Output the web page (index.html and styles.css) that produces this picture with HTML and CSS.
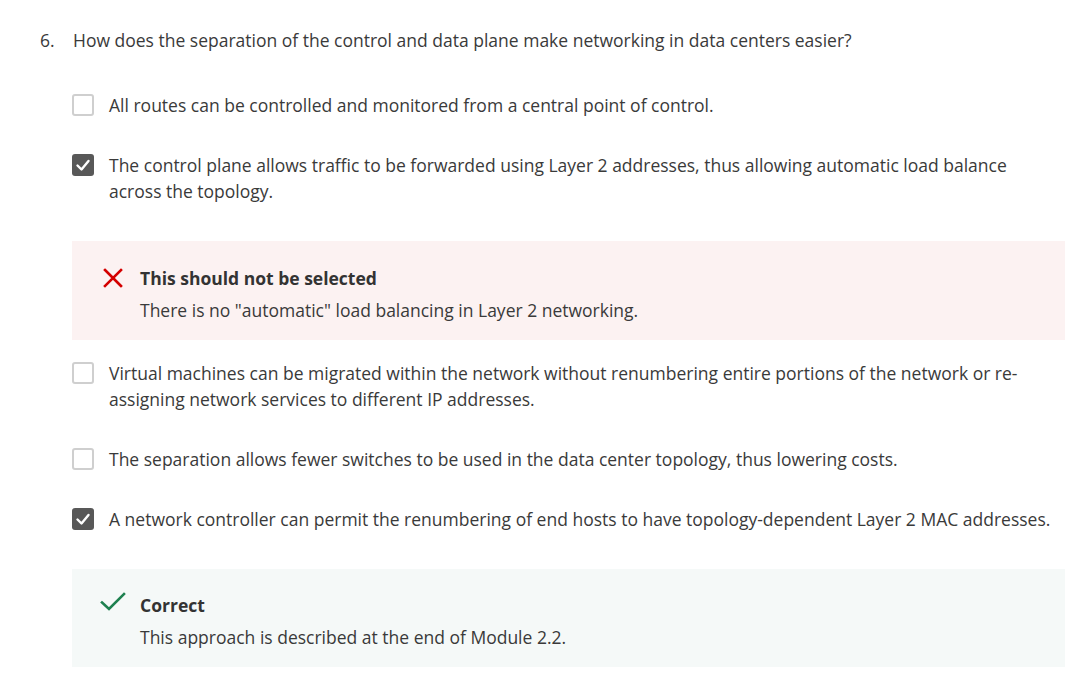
FILE: index.html
```html
<!DOCTYPE html>
<html>
<head>
<meta charset="utf-8">
<link rel="stylesheet" href="styles.css">
</head>
<body>
<div class="page">
  <div class="question">
    <span class="num">6.</span>
    <span class="qtext">How does the separation of the control and data plane make networking in data centers easier?</span>
  </div>
  <div class="answers">
    <div class="option">
      <span class="box"></span>
      <span class="otext">All routes can be controlled and monitored from a central point of control.</span>
    </div>
    <div class="option">
      <span class="box checked"><svg viewBox="0 0 22 22" width="22" height="22"><path d="M5.5 11.5 L9.5 15.5 L16.5 7" fill="none" stroke="#fff" stroke-width="2.4" stroke-linecap="round" stroke-linejoin="round"/></svg></span>
      <span class="otext">The control plane allows traffic to be forwarded using Layer 2 addresses, thus allowing automatic load balance across the topology.</span>
    </div>
    <div class="feedback wrong">
      <span class="ficon"><svg viewBox="0 0 20 20" width="20" height="20"><path d="M2 2 L18 18 M18 2 L2 18" stroke="#d40000" stroke-width="2.6" stroke-linecap="square"/></svg></span>
      <div class="fbody">
        <div class="ftitle">This should not be selected</div>
        <div class="ftext">There is no "automatic" load balancing in Layer 2 networking.</div>
      </div>
    </div>
    <div class="option">
      <span class="box"></span>
      <span class="otext">Virtual machines can be migrated within the network without renumbering entire portions of the network or re-assigning network services to different IP addresses.</span>
    </div>
    <div class="option">
      <span class="box"></span>
      <span class="otext">The separation allows fewer switches to be used in the data center topology, thus lowering costs.</span>
    </div>
    <div class="option">
      <span class="box checked"><svg viewBox="0 0 22 22" width="22" height="22"><path d="M5.5 11.5 L9.5 15.5 L16.5 7" fill="none" stroke="#fff" stroke-width="2.4" stroke-linecap="round" stroke-linejoin="round"/></svg></span>
      <span class="otext">A network controller can permit the renumbering of end hosts to have topology-dependent Layer 2 MAC addresses.</span>
    </div>
    <div class="feedback right">
      <span class="ficon"><svg viewBox="0 0 26 20" width="26" height="20"><path d="M2 10.5 L9 17 L24 2" fill="none" stroke="#1e8150" stroke-width="2.6" stroke-linecap="square"/></svg></span>
      <div class="fbody">
        <div class="ftitle">Correct</div>
        <div class="ftext">This approach is described at the end of Module 2.2.</div>
      </div>
    </div>
  </div>
</div>
</body>
</html>
```
FILE: styles.css
```css
html, body {
  margin: 0;
  padding: 0;
  background: #fff;
}
body {
  font-family: "Open Sans", "Liberation Sans", sans-serif;
  font-size: 17.5px;
  line-height: 26px;
  color: #3a3a3a;
}
.page {
  padding: 27px 12px 20px 40px;
}
.question {
  display: flex;
}
.num {
  width: 33px;
  flex: none;
}
.answers {
  margin-left: 32px;
  margin-top: 39px;
  display: flex;
  flex-direction: column;
}
.option {
  display: flex;
  align-items: flex-start;
  margin-bottom: 34px;
}
.box {
  flex: none;
  width: 22px;
  height: 22px;
  box-sizing: border-box;
  border: 2px solid #cfcfcf;
  border-radius: 3px;
  margin-top: 2px;
  margin-right: 15px;
  background: #fff;
}
.box.checked {
  border: none;
  background: #585858;
}
.box svg {
  display: block;
}
.otext {
  flex: 1;
  margin-right: 9px;
}
.feedback {
  display: flex;
  align-items: flex-start;
  padding: 24px 16px 17px 31px;
  margin-top: 3px;
  margin-bottom: 20px;
}
.feedback.wrong {
  background: #fcf2f2;
}
.feedback.right {
  background: #f5f9f8;
  padding-top: 23px;
  padding-bottom: 17px;
  margin-bottom: 0;
}
.ficon {
  flex: none;
  width: 37px;
  height: 26px;
  display: flex;
  align-items: center;
}
.feedback.right .ficon {
  margin-left: -3px;
  width: 40px;
  align-items: flex-start;
}
.ficon svg {
  display: block;
}
.ftitle {
  font-weight: 700;
  color: #333;
  margin-bottom: 6px;
}
```
